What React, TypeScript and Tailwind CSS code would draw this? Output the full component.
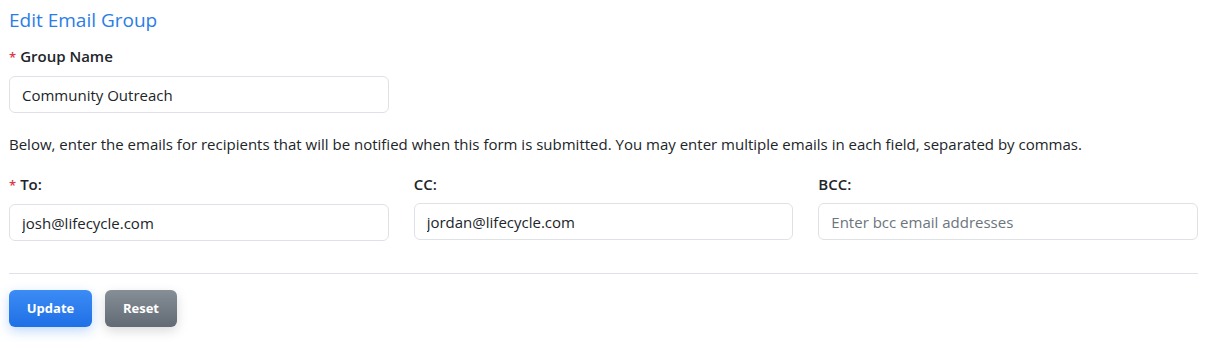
import React from 'react';

export default function App() {
  const fields = [
    { label: 'To:', required: true, value: 'josh@lifecycle.com', placeholder: 'Enter to email addresses' },
    { label: 'CC:', required: false, value: 'jordan@lifecycle.com', placeholder: 'Enter cc email addresses' },
    { label: 'BCC:', required: false, value: '', placeholder: 'Enter bcc email addresses' },
  ];

  return (
    <div className="bg-white pl-[9px] pr-[10px] pt-[7px] pb-4 text-[#212529] font-['Open_Sans',sans-serif]">
      <h1 className="text-[19px] leading-[26px] text-[#2a7de8]">Edit Email Group</h1>

      <div className="mt-[13px]">
        <label className="block text-[15px] font-semibold leading-5">
          <span className="text-[#dc3545] mr-1 text-[13px]">*</span>Group Name
        </label>
        <input
          className="mt-[9px] w-[380px] h-[37px] px-3 text-[15px] border border-[#dee2e6] rounded-md outline-none"
          defaultValue="Community Outreach"
        />
      </div>

      <p className="mt-[21px] text-[15px] leading-5">
        Below, enter the emails for recipients that will be notified when this form is submitted. You may enter multiple emails in each field, separated by commas.
      </p>

      <div className="mt-[20px] grid grid-cols-3 gap-[25px]">
        {fields.map((f) => (
          <div key={f.label}>
            <label className="block text-[15px] font-semibold leading-5">
              {f.required && <span className="text-[#dc3545] mr-1 text-[13px]">*</span>}
              {f.label}
            </label>
            <input
              className="mt-[9px] w-full h-[37px] px-3 text-[15px] border border-[#dee2e6] rounded-md outline-none placeholder:text-[#6c757d]"
              defaultValue={f.value}
              placeholder={f.placeholder}
            />
          </div>
        ))}
      </div>

      <hr className="mt-[32px] border-t border-[#dee2e6]" />

      <div className="mt-[16px] flex gap-[13px]">
        <button className="w-[83px] h-[37px] rounded-md bg-gradient-to-b from-[#3b8cf5] to-[#1f6fe6] text-white text-[13px] font-bold shadow-[0_4px_12px_rgba(47,128,237,0.3)]">
          Update
        </button>
        <button className="w-[72px] h-[37px] rounded-md bg-gradient-to-b from-[#868e96] to-[#626a75] text-white text-[13px] font-bold shadow-[0_4px_12px_rgba(0,0,0,0.15)]">
          Reset
        </button>
      </div>
    </div>
  );
}
